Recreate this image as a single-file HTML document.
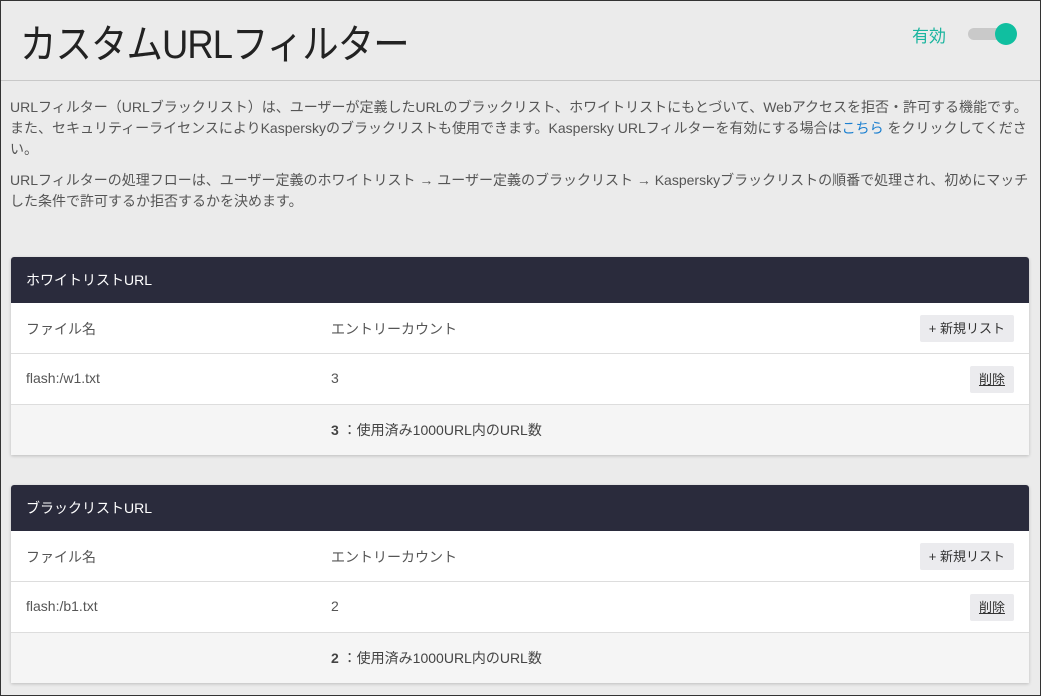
<!DOCTYPE html>
<html><head><meta charset="utf-8"><style>
*{margin:0;padding:0;box-sizing:border-box}
body{width:1041px;height:696px;overflow:hidden;background:#ebebeb;font-family:"Liberation Sans","Noto Sans CJK JP",sans-serif;color:#555;border:1px solid #333;position:relative}
.top{height:80px;border-bottom:1px solid #c8c8c8;position:relative}
.top h1{position:absolute;left:19px;top:11px;font-size:40px;font-weight:400;color:#222;letter-spacing:-1px;transform:scaleX(0.91);transform-origin:left center;white-space:nowrap}
.en{position:absolute;left:911px;top:21px;font-size:17px;color:#1bb59f}
.sw{position:absolute;left:967px;top:27px;width:46px;height:12px;border-radius:6px;background:#c9c9c9}
.sw i{position:absolute;right:-3px;top:-5px;width:22px;height:22px;border-radius:50%;background:#10bfa0}
.desc{position:absolute;left:9px;top:96px;width:1022px;font-size:14px;line-height:21px}
.desc p{margin-bottom:10px}
.desc a{color:#1a7fd0}
.card{position:absolute;left:10px;width:1018px;background:#fff;box-shadow:0 1px 3px rgba(0,0,0,.2);border-radius:3px 3px 0 0}
.hd{height:46px;background:#2a2b3c;color:#fff;font-size:14px;line-height:46px;padding-left:15px;border-radius:3px 3px 0 0}
.row{height:51px;border-bottom:1px solid #ddd;position:relative;font-size:14px}
.row span{position:absolute;top:16px}
.c1{left:15px}.c2{left:320px}
.btn{position:absolute;right:15px;top:12px;height:27px;background:#ebebee;border-radius:2px;font-size:13px;line-height:27px;padding:0 9px;color:#333}
.ft{height:50px;background:#f5f5f5;position:relative;font-size:14px}
.ft span{position:absolute;left:320px;top:15px;color:#444}
</style></head><body>
<div class="top"><h1>カスタムURLフィルター</h1><div class="en">有効</div><div class="sw"><i></i></div></div>
<div class="desc"><p>URLフィルター（URLブラックリスト）は、ユーザーが定義したURLのブラックリスト、ホワイトリストにもとづいて、Webアクセスを拒否・許可する機能です。また、セキュリティーライセンスによりKasperskyのブラックリストも使用できます。Kaspersky URLフィルターを有効にする場合は<a>こちら</a> をクリックしてください。</p><p>URLフィルターの処理フローは、ユーザー定義のホワイトリスト → ユーザー定義のブラックリスト → Kasperskyブラックリストの順番で処理され、初めにマッチした条件で許可するか拒否するかを決めます。</p></div>
<div class="card" style="top:256px"><div class="hd">ホワイトリストURL</div>
<div class="row"><span class="c1">ファイル名</span><span class="c2">エントリーカウント</span><div class="btn">+ 新規リスト</div></div>
<div class="row"><span class="c1">flash:/w1.txt</span><span class="c2">3</span><div class="btn" style="text-decoration:underline">削除</div></div>
<div class="ft"><span><b>3</b> ：使用済み1000URL内のURL数</span></div></div>
<div class="card" style="top:484px"><div class="hd">ブラックリストURL</div>
<div class="row"><span class="c1">ファイル名</span><span class="c2">エントリーカウント</span><div class="btn">+ 新規リスト</div></div>
<div class="row"><span class="c1">flash:/b1.txt</span><span class="c2">2</span><div class="btn" style="text-decoration:underline">削除</div></div>
<div class="ft"><span><b>2</b> ：使用済み1000URL内のURL数</span></div></div>
</body></html>
